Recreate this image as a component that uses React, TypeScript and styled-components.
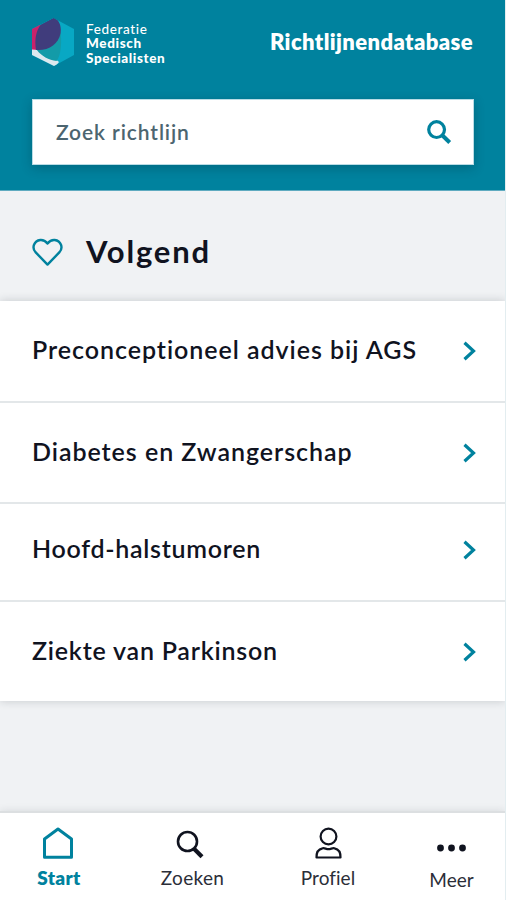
import React from "react";
import styled, { createGlobalStyle } from "styled-components";

const teal = "#00829e";
const ink = "#10131f";

const GlobalStyle = createGlobalStyle`
  * { box-sizing: border-box; }
  body { margin: 0; background: #f0f2f4; font-family: Lato, "Open Sans", sans-serif; color: ${ink}; }
`;

const Screen = styled.div`
  width: 506px;
  height: 900px;
  display: flex;
  flex-direction: column;
  overflow: hidden;
  background: #f0f2f4;
  border-right: 1px solid #e3edf0;
`;

const Header = styled.header`
  height: 191px;
  flex: none;
  padding: 17px 31px 0 32px;
  background: ${teal};
  border-bottom: 1px solid #5fabc0;
`;

const Brand = styled.div`
  display: flex;
  align-items: flex-start;
  height: 82px;
  color: #fff;
`;

const LogoText = styled.div`
  margin: 5px 0 0 11px;
  font-size: 13.5px;
  line-height: 14.3px;
`;

const LogoLine = styled.div<{ $light?: boolean; $spacing: number }>`
  font-weight: ${(p) => (p.$light ? 500 : 900)};
  letter-spacing: ${(p) => p.$spacing}px;
`;

const SiteName = styled.div`
  margin: 11px 1px 0 auto;
  font-size: 22px;
  line-height: 28px;
  font-weight: 800;
  letter-spacing: 0.4px;
`;

const SearchBox = styled.div`
  display: flex;
  align-items: center;
  justify-content: space-between;
  height: 66px;
  padding: 0 21px 0 23px;
  background: #fff;
  border: 1px solid #b9dce5;
  box-shadow: 0 3px 10px rgba(0, 40, 55, 0.28);
`;

const Placeholder = styled.span`
  color: #4c6570;
  font-size: 21px;
  line-height: 28px;
  font-weight: 600;
  letter-spacing: 0.9px;
`;

const SectionHead = styled.div`
  display: flex;
  align-items: center;
  flex: none;
  height: 110px;
  padding: 11px 0 0 32px;
  gap: 22px;
`;

const Title = styled.h1`
  margin: 0 0 1px;
  font-size: 31px;
  line-height: 40px;
  font-weight: 700;
  letter-spacing: 1.8px;
`;

const List = styled.ul`
  flex: none;
  margin: 0;
  padding: 0;
  list-style: none;
  background: #fff;
  box-shadow: 0 0 9px rgba(30, 40, 50, 0.2);
`;

const Row = styled.li<{ $height: number; $lift: number }>`
  display: flex;
  align-items: center;
  justify-content: space-between;
  height: ${(p) => p.$height}px;
  padding: 0 28px ${(p) => p.$lift}px 32px;
  border-bottom: 2px solid #e3e7e9;
  &:last-child { border-bottom: 0; }
`;

const RowLabel = styled.span<{ $spacing: number }>`
  margin-bottom: 4px;
  font-size: 25px;
  line-height: 32px;
  font-weight: 600;
  letter-spacing: ${(p) => p.$spacing}px;
  white-space: nowrap;
`;

const TabBar = styled.nav`
  display: flex;
  height: 89px;
  flex: none;
  margin-top: auto;
  background: #fff;
  border-top: 2px solid #dcdfe1;
  box-shadow: 0 0 8px rgba(30, 40, 50, 0.12);
`;

const Tab = styled.a<{ $active?: boolean; $width: number; $drop?: number }>`
  display: flex;
  flex: none;
  flex-direction: column;
  align-items: center;
  width: ${(p) => p.$width}px;
  padding-top: ${(p) => 14 + (p.$drop ?? 0)}px;
  color: ${(p) => (p.$active ? teal : "#2b2e38")};
  font-weight: ${(p) => (p.$active ? 800 : 400)};
`;

const TabIcon = styled.span`
  display: flex;
  height: 36px;
`;

const TabLabel = styled.span<{ $spacing: number }>`
  font-size: 19px;
  line-height: 30px;
  letter-spacing: ${(p) => p.$spacing}px;
`;

const Logo = () => (
  <svg width="43" height="50" viewBox="0 0 43 50">
    <defs>
      <clipPath id="hex"><path d="M21.5 1 42 12v26L22 49 0 38V12Z" /></clipPath>
    </defs>
    <g clipPath="url(#hex)">
      <path d="M0 0h43v50H0Z" fill="#08a8c4" />
      <path d="M0 8h12v25H0Z" fill="#c8236b" />
      <path d="M0 32.500c9 .5 18 5 27 12.500l-4 5H0Z" fill="#dce8ee" />
      <path d="M5 33c11-1 20-9 23.500-19 1.500 11 .5 25-4 30C17 43 9 39 5 33Z" fill="#139ba8" />
      <path d="M22 .5c6 3 7.500 10 6.500 16C26.500 27 16.500 34 4 33 2.500 24 3.500 14 9 7.500Z" fill="#403c7c" />
    </g>
  </svg>
);

const SearchIcon = () => (
  <svg width="26" height="26" viewBox="0 0 26 26" fill="none" stroke={teal}>
    <circle cx="10.6" cy="10.6" r="7.9" strokeWidth="3.2" />
    <path d="m16.5 16.5 7.2 7" strokeWidth="4" />
  </svg>
);

const Heart = () => (
  <svg width="32" height="28" viewBox="0 0 32 28" fill="none" stroke={teal} strokeWidth="2.4" strokeLinejoin="round">
    <path d="M15.500 26.600 3.700 14.400C-.6 9.800 2 2.800 8.300 2c3-.3 5.200 1 7.200 3.500C17.500 3 19.700 1.700 22.700 2 29 2.800 31.600 9.800 27.300 14.400Z" />
  </svg>
);

const Chevron = () => (
  <svg width="15" height="20" viewBox="0 0 15 20" fill="none" stroke={teal} strokeWidth="3.2">
    <path d="m2.500 1.800 9 8.200-9 8.200" />
  </svg>
);

const HomeIcon = () => (
  <svg width="34" height="34" viewBox="0 0 34 34" fill="none" stroke={teal} strokeWidth="3" strokeLinejoin="round">
    <path d="M2.500 12 16 2l13.500 10v18.200h-27Z" />
  </svg>
);

const TabSearchIcon = () => (
  <svg width="34" height="34" viewBox="0 0 34 34" fill="none" stroke={ink}>
    <circle cx="11.500" cy="14.500" r="9.500" strokeWidth="2.600" />
    <path d="m17.800 21.500 8.200 8.200" strokeWidth="4.200" />
  </svg>
);

const PersonIcon = () => (
  <svg width="28" height="34" viewBox="0 0 28 34" fill="none" stroke={ink} strokeWidth="2.200" strokeLinejoin="round">
    <circle cx="14.500" cy="9.500" r="7.900" />
    <path d="M8.500 21.300c2-.6 3.500.9 6 .9s4-1.500 6-.9c4 .8 6.200 4 6 9.200h-24c-.2-5.200 2-8.400 6-9.200Z" />
  </svg>
);

const Dots = () => (
  <svg width="30" height="34" viewBox="0 0 30 34" fill={ink}>
    <circle cx="3.500" cy="19" r="3.400" />
    <circle cx="14.500" cy="19" r="3.400" />
    <circle cx="25.500" cy="19" r="3.400" />
  </svg>
);

const guidelines = [
  { name: "Preconceptioneel advies bij AGS", height: 102, spacing: 0.96, lift: 0 },
  { name: "Diabetes en Zwangerschap", height: 101, spacing: 0.96, lift: 0 },
  { name: "Hoofd-halstumoren", height: 98, spacing: 0.72, lift: 4 },
  { name: "Ziekte van Parkinson", height: 99, spacing: 0.78, lift: 0 },
];

export default function App() {
  return (
    <Screen>
      <GlobalStyle />
      <Header>
        <Brand>
          <Logo />
          <LogoText>
            <LogoLine $light $spacing={0.65}>Federatie</LogoLine>
            <LogoLine $spacing={0.65}>Medisch</LogoLine>
            <LogoLine $spacing={0.6}>Specialisten</LogoLine>
          </LogoText>
          <SiteName>Richtlijnendatabase</SiteName>
        </Brand>
        <SearchBox>
          <Placeholder>Zoek richtlijn</Placeholder>
          <SearchIcon />
        </SearchBox>
      </Header>
      <SectionHead>
        <Heart />
        <Title>Volgend</Title>
      </SectionHead>
      <List>
        {guidelines.map((g) => (
          <Row key={g.name} $height={g.height} $lift={g.lift}>
            <RowLabel $spacing={g.spacing}>{g.name}</RowLabel>
            <Chevron />
          </Row>
        ))}
      </List>
      <TabBar>
        <Tab $active $width={118}>
          <TabIcon><HomeIcon /></TabIcon>
          <TabLabel $spacing={0.3}>Start</TabLabel>
        </Tab>
        <Tab $width={149}>
          <TabIcon><TabSearchIcon /></TabIcon>
          <TabLabel $spacing={0.3}>Zoeken</TabLabel>
        </Tab>
        <Tab $width={122}>
          <TabIcon><PersonIcon /></TabIcon>
          <TabLabel $spacing={0.05}>Profiel</TabLabel>
        </Tab>
        <Tab $width={125} $drop={2}>
          <TabIcon><Dots /></TabIcon>
          <TabLabel $spacing={0}>Meer</TabLabel>
        </Tab>
      </TabBar>
    </Screen>
  );
}
